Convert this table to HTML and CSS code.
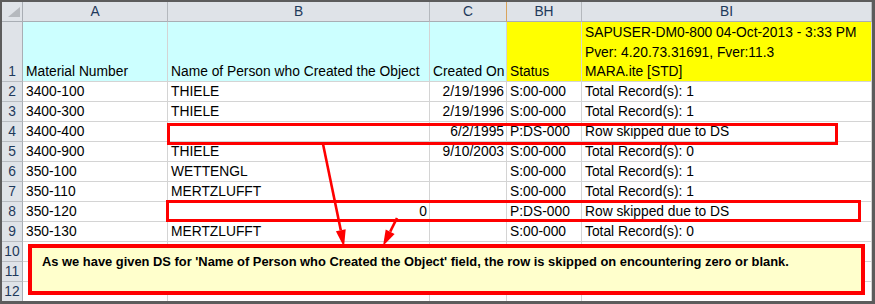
FILE: index.html
```html
<!DOCTYPE html>
<html>
<head>
<meta charset="utf-8">
<link rel="stylesheet" href="styles.css">
</head>
<body>
<div class="sheet">
  <div class="grid">
    <div class="corner"><svg class="sel" width="20" height="19" viewBox="0 0 20 19"><polygon points="6,15 18,15 18,5" fill="#b5b9be"/></svg></div>
    <div class="ch">A</div>
    <div class="ch">B</div>
    <div class="ch hid">C</div>
    <div class="ch">BH</div>
    <div class="ch">BI</div>

    <div class="rh">1</div>
    <div class="c cy">Material Number</div>
    <div class="c cy">Name of Person who Created the Object</div>
    <div class="c cy">Created On</div>
    <div class="c yl">Status</div>
    <div class="c yl"><div class="stack"><div class="ln">SAPUSER-DM0-800 04-Oct-2013 - 3:33 PM</div><div class="ln">Pver: 4.20.73.31691, Fver:11.3</div><div>MARA.ite [STD]</div></div></div>

    <div class="rh">2</div>
    <div class="c">3400-100</div>
    <div class="c">THIELE</div>
    <div class="c r">2/19/1996</div>
    <div class="c">S:00-000</div>
    <div class="c">Total Record(s): 1</div>

    <div class="rh">3</div>
    <div class="c">3400-300</div>
    <div class="c">THIELE</div>
    <div class="c r">2/19/1996</div>
    <div class="c">S:00-000</div>
    <div class="c">Total Record(s): 1</div>

    <div class="rh">4</div>
    <div class="c">3400-400</div>
    <div class="c"></div>
    <div class="c r">6/2/1995</div>
    <div class="c">P:DS-000</div>
    <div class="c">Row skipped due to DS</div>

    <div class="rh">5</div>
    <div class="c">3400-900</div>
    <div class="c">THIELE</div>
    <div class="c r">9/10/2003</div>
    <div class="c">S:00-000</div>
    <div class="c">Total Record(s): 0</div>

    <div class="rh">6</div>
    <div class="c">350-100</div>
    <div class="c">WETTENGL</div>
    <div class="c r"></div>
    <div class="c">S:00-000</div>
    <div class="c">Total Record(s): 1</div>

    <div class="rh">7</div>
    <div class="c">350-110</div>
    <div class="c">MERTZLUFFT</div>
    <div class="c r"></div>
    <div class="c">S:00-000</div>
    <div class="c">Total Record(s): 1</div>

    <div class="rh">8</div>
    <div class="c">350-120</div>
    <div class="c r">0</div>
    <div class="c r"></div>
    <div class="c">P:DS-000</div>
    <div class="c">Row skipped due to DS</div>

    <div class="rh">9</div>
    <div class="c">350-130</div>
    <div class="c">MERTZLUFFT</div>
    <div class="c r"></div>
    <div class="c">S:00-000</div>
    <div class="c">Total Record(s): 0</div>

    <div class="rh">10</div>
    <div class="c"></div><div class="c"></div><div class="c"></div><div class="c"></div><div class="c"></div>
    <div class="rh">11</div>
    <div class="c"></div><div class="c"></div><div class="c"></div><div class="c"></div><div class="c"></div>
    <div class="rh">12</div>
    <div class="c"></div><div class="c"></div><div class="c"></div><div class="c"></div><div class="c"></div>
  </div>

  <div class="box box1"></div>
  <div class="box box2"></div>
  <div class="callout">As we have given DS for 'Name of Person who Created the Object' field, the row is skipped on encountering zero or blank.</div>

  <svg class="arrows" width="875" height="304" viewBox="0 0 875 304">
    <line x1="323" y1="144" x2="340.8" y2="230.3" stroke="#ff0000" stroke-width="2.6"/>
    <polygon points="344,247 345.7,229.3 335.9,231.3" fill="#ff0000"/>
    <line x1="397" y1="218" x2="390.2" y2="231.7" stroke="#ff0000" stroke-width="2.6"/>
    <polygon points="383,246 394.6,233.9 385.7,229.5" fill="#ff0000"/>
  </svg>
</div>
</body>
</html>
```

FILE: styles.css
```css
html, body {
  margin: 0;
  padding: 0;
  background: #ffffff;
}

.sheet {
  position: relative;
  width: 875px;
  height: 304px;
  box-sizing: border-box;
  border-style: solid;
  border-color: #5c5c5c;
  border-width: 2px 3px 3px 2px;
  overflow: hidden;
  font-family: "Liberation Sans", Arial, sans-serif;
  font-size: 13.8px;
  color: #000;
}

.grid {
  display: grid;
  grid-template-columns: 21px 145px 262px 77px 75px 1fr;
  grid-template-rows: 20px 60px repeat(11, 20px);
}

.grid > div {
  box-sizing: border-box;
  display: flex;
  align-items: flex-end;
  line-height: 18px;
  white-space: nowrap;
  overflow: visible;
}

.corner {
  background: #dfe3e8;
  border-right: 1px solid #a9aeb4;
  border-bottom: 1px solid #a9aeb4;
  position: relative;
}

.sel {
  display: block;
  position: absolute;
  left: 0;
  top: 0;
}

.ch {
  background: #dfe3e8;
  border-right: 1px solid #b4b8bd;
  border-bottom: 1px solid #a9aeb4;
  justify-content: center;
  color: #1e395b;
}

.ch.hid {
  border-right-color: #d9a45c;
}

.rh {
  background: #dfe3e8;
  border-right: 1px solid #a9aeb4;
  border-bottom: 1px solid #b9bdc2;
  justify-content: center;
  color: #1e395b;
}

.c {
  border-right: 1px solid #d4d4d4;
  border-bottom: 1px solid #d4d4d4;
  padding: 0 3px;
}

.c.r {
  justify-content: flex-end;
  padding: 0 2px 0 3px;
}

.cy {
  background: #ccffff;
}

.yl {
  background: #ffff00;
}

.stack .ln {
  line-height: 20px;
}

.box {
  position: absolute;
  box-sizing: border-box;
  border: 3px solid #ff0000;
}

.box1 {
  left: 165px;
  top: 121px;
  width: 671px;
  height: 22px;
}

.box2 {
  left: 164px;
  top: 198px;
  width: 695px;
  height: 22px;
}

.callout {
  position: absolute;
  box-sizing: border-box;
  left: 26px;
  top: 242px;
  width: 837px;
  height: 51px;
  border: 4px solid #ff0000;
  background: #ffffcc;
  padding: 6px 0 0 10px;
  font-weight: bold;
  font-size: 12.9px;
  line-height: 16px;
  color: #000;
  white-space: nowrap;
}

.arrows {
  position: absolute;
  left: -2px;
  top: -2px;
  pointer-events: none;
}
```
